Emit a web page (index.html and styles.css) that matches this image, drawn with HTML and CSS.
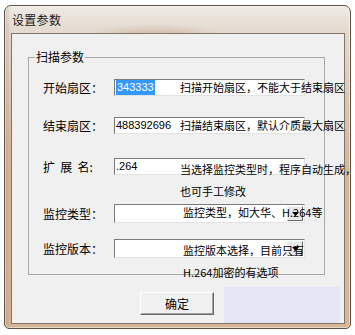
FILE: index.html
```html
<!DOCTYPE html>
<html lang="zh-CN">
<head>
    <meta charset="UTF-8">
    <meta name="viewport" content="width=device-width, initial-scale=1.0">
    <title>设置参数</title>
    <link rel="stylesheet" href="styles.css">
</head>
<body>

<div class="window">
    <div class="titlebar">设置参数</div>

    <div class="client">
        <fieldset class="group">
            <legend>扫描参数</legend>

            <div class="rows">
                <div class="row">
                    <label class="label">开始扇区：</label>
                    <div class="edit"><span class="sel">343333</span></div>
                    <span class="hint">扫描开始扇区，不能大于结束扇区</span>
                </div>

                <div class="row">
                    <label class="label">结束扇区：</label>
                    <div class="edit">488392696</div>
                    <span class="hint">扫描结束扇区，默认介质最大扇区</span>
                </div>

                <div class="row">
                    <label class="label spaced">扩 展 名:</label>
                    <div class="edit">.264</div>
                    <span class="hint multi">当选择监控类型时，程序自动生成，<br>也可手工修改</span>
                </div>

                <div class="row">
                    <label class="label tall">监控类型：</label>
                    <div class="edit combo">
                        <span class="drop"><svg width="7" height="4" viewBox="0 0 7 4"><path d="M0 0h7L3.5 4z"/></svg></span>
                    </div>
                    <span class="hint shifted">监控类型，如大华、H.264等</span>
                </div>

                <div class="row">
                    <label class="label tall">监控版本：</label>
                    <div class="edit combo">
                        <span class="drop"><svg width="7" height="4" viewBox="0 0 7 4"><path d="M0 0h7L3.5 4z"/></svg></span>
                    </div>
                    <span class="hint multi shifted">监控版本选择，目前只有<br>H.264加密的有选项</span>
                </div>
            </div>
        </fieldset>

        <div class="actions">
            <button class="btn">确定</button>
            <div class="panel"></div>
        </div>
    </div>
</div>

</body>
</html>
```

FILE: styles.css
```css
body {
    margin: 0;
    background: #fff;
    font-family: "Noto Sans CJK SC", sans-serif;
    font-size: 12px;
    color: #000;
}

/* window frame */
.window {
    width: 347px;
    height: 324px;
    box-sizing: border-box;
    margin: 5px 0 0 4px;
    padding: 0 5px 4px 6px;
    border: 1px solid #5e5247;
    border-radius: 7px 7px 5px 5px;
    box-shadow: inset 0 0 0 1px rgba(255, 255, 255, 0.45);
    background:
        radial-gradient(ellipse 70px 12px at 150px 30px, rgba(160, 120, 90, 0.35), transparent),
        linear-gradient(90deg, rgba(150, 110, 80, 0.25) 0, transparent 6px),
        linear-gradient(180deg, #eeeae6 0, #e5dbd1 22px, #d6b89c 45%, #d8b597 100%);
    display: flex;
    flex-direction: column;
}
.titlebar {
    height: 27px;
    line-height: 27px;
    padding-left: 1px;
    color: #1b1b1b;
    font-size: 12px;
    letter-spacing: 0.3px;
}
.client {
    flex: 1;
    border: 1px solid #7f7468;
    background: #f0f0f0;
    display: flex;
    flex-direction: column;
}

/* group box */
.group {
    margin: 16px 0 0 16px;
    width: 297px;
    min-width: 0;
    box-sizing: border-box;
    padding: 15px 0 0 14px;
    border: 1px solid #a8a8a8;
}
.group legend {
    padding: 0 1px;
    margin-left: -8px;
    line-height: 14px;
    font-size: 12px;
}
.rows {
    display: grid;
    grid-template-rows: 38px 41px 46px 35px 35px;
}
.row {
    display: grid;
    grid-template-columns: 71px 191px;
    align-items: start;
}
.row > * {
    grid-row: 1;
}
.label {
    grid-column: 1;
    line-height: 17px;
}
.label.tall {
    line-height: 19px;
}
.label.spaced {
    word-spacing: 2.5px;
}

/* text boxes */
.edit {
    grid-column: 2;
    height: 17px;
    box-sizing: border-box;
    padding-left: 1px;
    border: 1px solid;
    border-color: #7a7a7a #e3e3e3 #e3e3e3 #7a7a7a;
    background: #fff;
    font-family: "Liberation Sans", Arial, sans-serif;
    font-size: 11px;
    line-height: 15px;
}
.sel {
    display: inline-block;
    padding: 0 1px;
    background: #3399ff;
    color: #fff;
}
.combo {
    height: 19px;
    padding: 1px;
    display: flex;
    justify-content: flex-end;
}
.drop {
    width: 16px;
    box-sizing: border-box;
    border: 1px solid;
    border-color: #f4f4f4 #696969 #696969 #f4f4f4;
    background: #e8e8e8;
    display: flex;
    align-items: center;
    justify-content: center;
}

/* hint labels drawn over the boxes */
.hint {
    grid-column: 2;
    justify-self: start;
    margin: -3px 0 0 66px;
    white-space: nowrap;
    font-size: 11px;
    line-height: 22px;
}
.hint.multi {
    margin-top: 0;
}
.hint.shifted {
    margin-left: 69px;
}

/* bottom bar */
.actions {
    flex: 1;
    margin-top: 12px;
    display: flex;
    align-items: flex-start;
}
.btn {
    margin: 5px 0 0 128px;
    width: 74px;
    height: 23px;
    padding: 0;
    border: 1px solid;
    border-color: #fff #696969 #696969 #fff;
    box-shadow: inset -1px -1px #a0a0a0;
    background: #f0f0f0;
    font-family: "Noto Sans CJK SC", sans-serif;
    font-size: 12px;
    color: #000;
}
.panel {
    margin-left: 10px;
    width: 116px;
    align-self: stretch;
    background: #e5e5f6;
}
```
